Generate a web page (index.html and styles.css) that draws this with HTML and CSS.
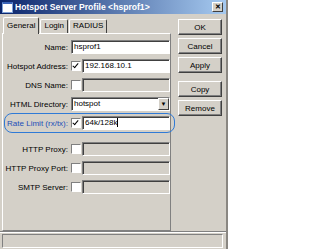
FILE: index.html
```html
<!DOCTYPE html>
<html lang="en">
<head>
  <meta charset="UTF-8">
  <title>Hotspot Server Profile</title>
  <link rel="stylesheet" href="styles.css">
</head>
<body>
  <div class="window">
    <div class="titlebar">
      <span class="title-icon"></span>
      <span class="title">Hotspot Server Profile &lt;hsprof1&gt;</span>
      <span class="close">&#x2715;</span>
    </div>

    <div class="content">
      <div class="left">
        <div class="tabs">
          <div class="tab active">General</div>
          <div class="tab">Login</div>
          <div class="tab">RADIUS</div>
        </div>
        <div class="panel">
          <div class="row">
            <label>Name:</label>
            <div class="field">hsprof1</div>
          </div>
          <div class="row">
            <label>Hotspot Address:</label>
            <span class="check on"></span>
            <div class="field">192.168.10.1</div>
          </div>
          <div class="row">
            <label>DNS Name:</label>
            <span class="check"></span>
            <div class="field off"></div>
          </div>
          <div class="row">
            <label>HTML Directory:</label>
            <div class="field select">hotspot<span class="drop">&#9660;</span></div>
          </div>
          <div class="row marked">
            <label>Rate Limit (rx/tx):</label>
            <span class="check on"></span>
            <div class="field">64k/128k<span class="caret"></span></div>
          </div>
          <div class="row spaced">
            <label>HTTP Proxy:</label>
            <span class="check"></span>
            <div class="field off"></div>
          </div>
          <div class="row">
            <label>HTTP Proxy Port:</label>
            <span class="check"></span>
            <div class="field off"></div>
          </div>
          <div class="row">
            <label>SMTP Server:</label>
            <span class="check"></span>
            <div class="field off"></div>
          </div>
        </div>
      </div>

      <div class="buttons">
        <button>OK</button>
        <button>Cancel</button>
        <button>Apply</button>
        <button class="gap">Copy</button>
        <button>Remove</button>
      </div>
    </div>

    <div class="statusbar">
      <div class="status"></div>
    </div>
  </div>
</body>
</html>
```

FILE: styles.css
```css
body {
  margin: 0;
  background-color: #fff;
  font-family: "Liberation Sans", Arial, sans-serif;
  font-size: 8px;
  color: #000;
}
.window {
  width: 228px;
  height: 249px;
  background-color: #d4d0c8;
  border-right: 2px solid #8a8782;
  box-sizing: border-box;
  display: flex;
  flex-direction: column;
}
.titlebar {
  height: 14px;
  background: linear-gradient(to right, #0a246a, #a6caf0);
  display: flex;
  align-items: center;
  padding: 0 3px 0 2px;
}
.title-icon {
  width: 9px;
  height: 8px;
  background-color: #fff;
  border: 1px solid #7fa2d8;
  border-top: 2px solid #3a64b8;
}
.title {
  margin-left: 2px;
  color: #fff;
  font-weight: bold;
  font-size: 8.6px;
  flex: 1;
}
.close {
  width: 11px;
  height: 10px;
  background-color: #d4d0c8;
  border: 1px solid;
  border-color: #fff #404040 #404040 #fff;
  box-sizing: border-box;
  font-size: 7px;
  font-weight: bold;
  line-height: 8px;
  text-align: center;
}
.content {
  display: flex;
  flex: 1;
}
.left {
  width: 169px;
  margin-left: 2px;
  display: flex;
  flex-direction: column;
}
.tabs {
  display: flex;
  align-items: flex-end;
  margin-top: 3px;
  height: 16px;
  padding-left: 1px;
}
.tab {
  height: 13px;
  line-height: 12px;
  padding: 0 3px;
  border: 1px solid;
  border-color: #fff #404040 transparent #fff;
  border-bottom: none;
  border-radius: 2px 2px 0 0;
  margin-right: 1px;
}
.tab.active {
  height: 16px;
  line-height: 15px;
  margin-bottom: -1px;
  background-color: #d4d0c8;
  position: relative;
  z-index: 1;
}
.panel {
  flex: 1;
  border: 1px solid;
  border-color: #fff #808080 #808080 #fff;
  padding-top: 6px;
  display: flex;
  flex-direction: column;
  gap: 5px;
}
.row {
  display: flex;
  align-items: center;
  height: 14px;
}
.row.spaced {
  margin-top: 7px;
}
.row label {
  width: 65px;
  text-align: right;
  padding-right: 3px;
  white-space: nowrap;
}
.row.marked {
  position: relative;
}
.row.marked label {
  color: #1c4fb8;
}
.row.marked::after {
  content: "";
  position: absolute;
  left: 1px;
  right: -5px;
  top: -3px;
  bottom: -3px;
  border: 1.5px solid #2f7ad6;
  border-radius: 8px;
}
.check {
  width: 10px;
  height: 10px;
  margin-right: 1px;
  background-color: #fff;
  border: 1px solid;
  border-color: #808080 #fff #fff #808080;
  box-sizing: border-box;
  position: relative;
}
.check.on::after {
  content: "";
  position: absolute;
  left: 2px;
  top: 0;
  width: 2px;
  height: 5px;
  border: solid #000;
  border-width: 0 1.5px 1.5px 0;
  transform: rotate(40deg);
}
.field {
  flex: 1;
  height: 14px;
  line-height: 12px;
  background-color: #fff;
  border: 1px solid;
  border-color: #808080 #fff #fff #808080;
  box-shadow: inset 1px 1px 0 #404040;
  box-sizing: border-box;
  padding-left: 2px;
  display: flex;
}
.field.off {
  background-color: #d4d0c8;
}
.drop {
  margin-left: auto;
  width: 11px;
  height: 12px;
  background-color: #d4d0c8;
  border: 1px solid;
  border-color: #fff #404040 #404040 #fff;
  box-sizing: border-box;
  font-size: 6px;
  line-height: 10px;
  text-align: center;
}
.caret {
  width: 1px;
  height: 9px;
  margin-top: 1px;
  background-color: #000;
}
.buttons {
  margin-left: 7px;
  margin-top: 5px;
  display: flex;
  flex-direction: column;
  gap: 3px;
}
.buttons button {
  width: 44px;
  height: 16px;
  padding: 0;
  font-family: "Liberation Sans", Arial, sans-serif;
  font-size: 8px;
  background-color: #d4d0c8;
  color: #000;
  border: 1px solid;
  border-color: #fff #404040 #404040 #fff;
  box-shadow: inset -1px -1px 0 #808080;
}
.buttons button.gap {
  margin-top: 5px;
}
.statusbar {
  height: 18px;
  border-top: 1px solid #808080;
  box-shadow: inset 0 1px 0 #fff;
  padding: 2px 3px 3px 2px;
  box-sizing: border-box;
}
.status {
  height: 12px;
  border: 1px solid;
  border-color: #808080 #fff #fff #808080;
}
```
